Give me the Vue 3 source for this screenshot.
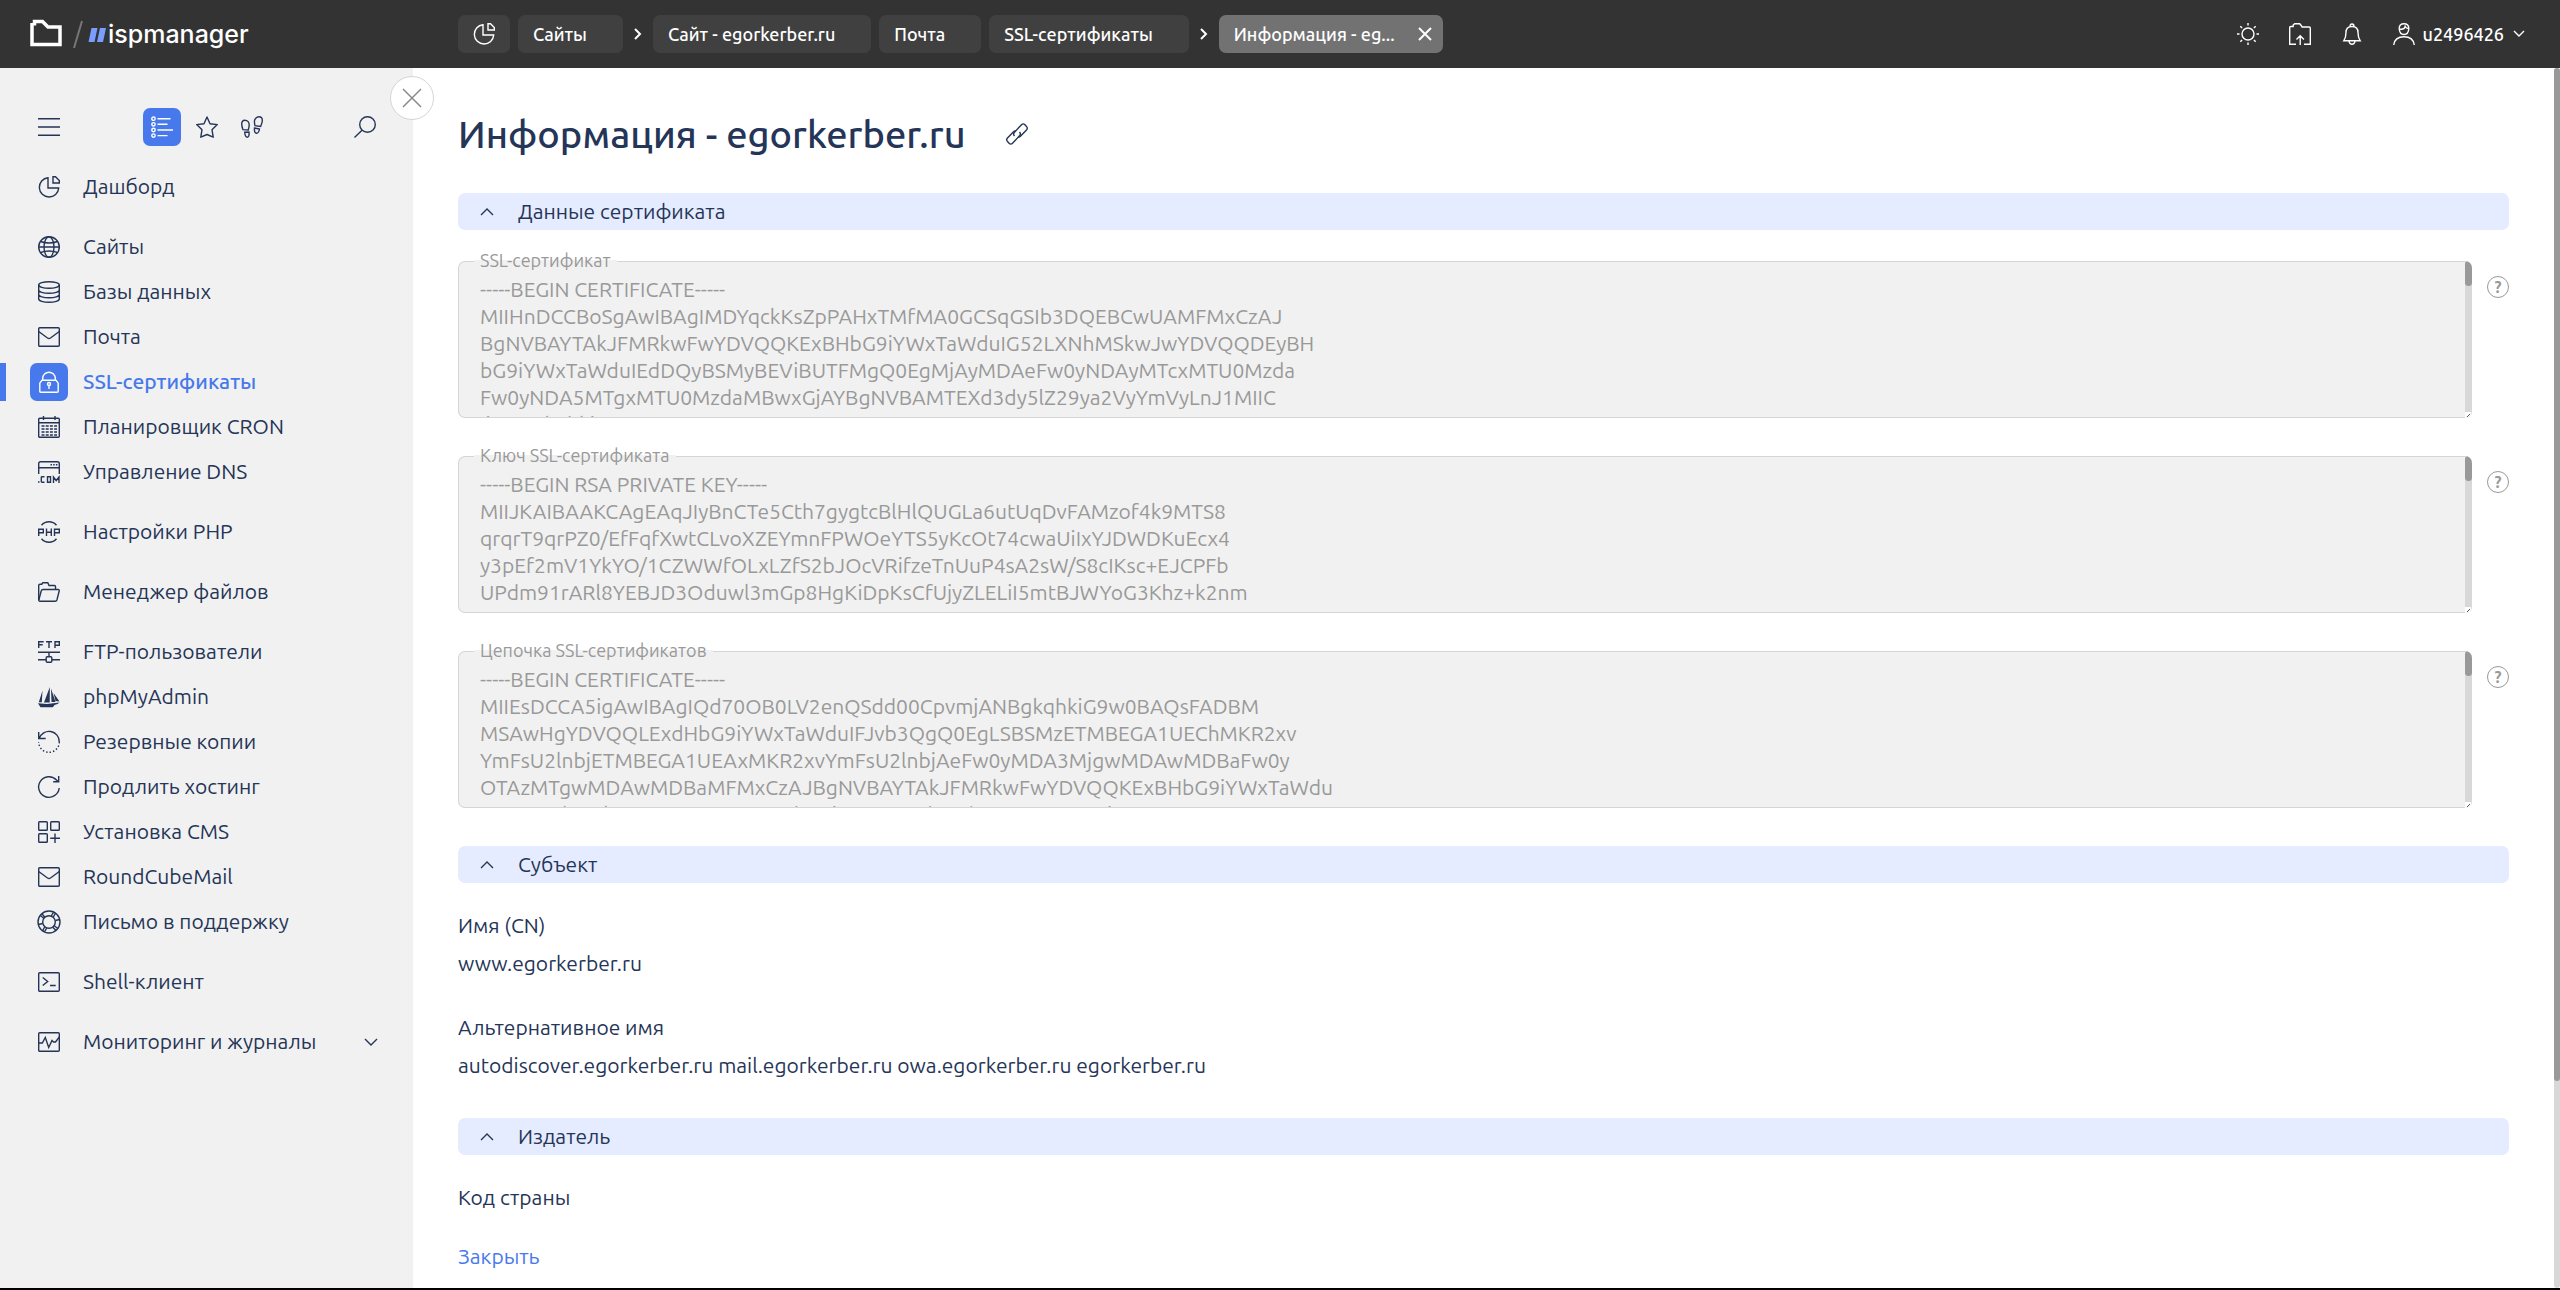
<script setup>
import { ref } from 'vue'

const icons = {
  pie: '<path d="M10 1.7A9.7 9.7 0 1 0 20.700 12H10z"/><path d="M15 .7v6.300h6.300V4.500L17.500.7z"/>',
  globe: '<circle cx="11" cy="11" r="10.300"/><ellipse cx="11" cy="11" rx="5" ry="10.300"/><path d="M.7 11h20.600M2.500 5.500c5 1.800 12 1.800 17 0M2.500 16.500c5-1.800 12-1.800 17 0"/>',
  db: '<ellipse cx="11" cy="4" rx="10.300" ry="3.300"/><path d="M.7 4v14c0 1.800 4.600 3.300 10.300 3.300s10.300-1.500 10.300-3.300V4M.7 9c0 1.800 4.600 3.300 10.300 3.300S21.300 10.800 21.300 9M.7 13.500c0 1.800 4.600 3.300 10.300 3.300s10.300-1.500 10.300-3.300"/>',
  mail: '<rect x=".7" y="1.700" width="20.600" height="18.600" rx="1"/><path d="M.7 5.500l8.800 6.500q1.500 1 3 0l8.800-6.500"/>',
  lock: '<path d="M4.700 10V7.500a6.300 6.300 0 0 1 12.600 0V10"/><path d="M4 9.200h14l2.200 3v8.100q0 1-1 1H2.800q-1 0-1-1v-8.100z"/><circle cx="11" cy="13" r="1.500"/><path d="M11 14.500V18"/>',
  cal: '<rect x=".7" y="2.200" width="20.600" height="19.100" rx="1"/><path d="M.7 6.700h20.600M5.500 0v4M17 0v4"/><path d="M3.500 10h15.500M3.500 13h15.500M3.500 16h15.500M3.500 19h15.500" stroke-dasharray="3 1.200"/>',
  dns: '<path d="M.7 13V2.700q0-2 2-2h16.600q2 0 2 2V13M.7 6.700h20.600"/><path d="M12.500 3.700h7" stroke-dasharray="1.500 1.200"/><path d="M0 21h1.500M6.500 15.700H4q-.700 0-.700.700v4.200q0 .700.700.700h2.500M9.500 15.700h3v5.600h-3zM15.500 22v-6l2.700 3.500L21 16v6"/>',
  php: '<path d="M3.500 4.200Q6.500.7 11 .7t7.500 3.500M3.500 17.800Q6.500 21.300 11 21.300t7.500-3.500"/><path d="M.7 15V8.200h4.600v3.600H.7M8.500 7.500V15M13.300 7.500V15M8.500 11.200h4.800M16.500 15V8.200h4.800v3.600h-4.800"/>',
  folder: '<path d="M.7 19V4.500q0-1.300 1.300-1.300h1.800l1-1.500h5l1.200 2.800h5.500q1 0 1 1v3"/><path d="M2 20.300q-1.500 0-1.100-1.500L3.200 10q.4-1.500 1.800-1.500h15q1.600 0 1.200 1.500l-2.300 9q-.4 1.300-1.700 1.300z"/>',
  ftp: '<path d="M.7 7V.7h5M.7 3.700h4M8 .7h6M11 .7V7M17 7V.7h4.300v3.600H17M0 11.200h22M11 11.200v4.500M0 18.700h8M14 18.700h8"/><rect x="8.200" y="15.700" width="5.600" height="5.600" rx="1"/>',
  boat: '<g fill="currentColor" stroke="none"><path d="M4.500 4.500L.8 16.200h3zM11.800 1L6 16.600h5.700zM13 2.500l.5 13.500h4zM15.500 7l6 8.500-4-.5zM0 17.300l9 .8 12.500-1.600q-1.500 1.500-5 2.500-.5 1.500-2 2.200H2.500z"/></g>',
  backup: '<path d="M.7 1v6.500h7M1.200 7.500A10.300 10.300 0 0 1 21.300 11"/><path d="M21.300 11A10.300 10.300 0 0 1 .7 11" stroke-dasharray="1.500 2"/>',
  renew: '<path d="M21.200 12A10.300 10.300 0 1 1 18.500 4L20.500 6M20.700 0v5.700h-5.500"/>',
  cms: '<rect x=".7" y=".7" width="8.600" height="8.600" rx=".8"/><rect x="12.700" y=".7" width="8.600" height="8.600" rx=".8"/><rect x=".7" y="12.700" width="8.600" height="8.600" rx=".8"/><path d="M17 12.500V22M12.200 17.300H22"/>',
  support: '<circle cx="11" cy="11" r="11"/><circle cx="11" cy="11" r="6.300"/><path d="M4 2.700l2.800 3.500M2.500 4.500L6 7.500M15.500 1.200L13.300 5M17.500 2.200L15.300 6M19.800 17.500l-3.600-2.800M18 19.500l-3.200-3.300M6.500 20.800L8.700 17M4.500 19.800L6.700 16M.3 13.500l4.400-1M21.700 8.500l-4.400 1"/>',
  shell: '<rect x=".7" y="1.700" width="20.600" height="18.600" rx="1"/><path d="M4.700 6.500l5 4-5 4M12 14.500h5.700"/>',
  monitor: '<rect x=".7" y="1.700" width="20.600" height="18.600" rx="1"/><path d="M.7 12h3.600l3-5.500 3.400 10 3.300-7 1.500 1.500h2L21.300 6"/>',
  burger: '<path d="M0 2.700h22M0 11h22M0 19.300h22"/>',
  list: '<circle cx="2.500" cy="2.700" r="1.700"/><circle cx="2.500" cy="8.300" r="1.700"/><circle cx="2.500" cy="14" r="1.700"/><circle cx="2.500" cy="19.600" r="1.700"/><path d="M6.500 2.700h13M6.500 8.300h10M6.500 14H22M6.500 19.600h10"/>',
  star: '<path d="M11 1l3 6.700 7.300.9-5.300 5.100 1.200 7.500L11 18.500l-6.200 2.700L6 13.700.7 8.600 8 7.700z" stroke-linejoin="round"/>',
  feet: '<path d="M2 13.700C1 11 .7 9.500.7 8 .7 5.500 2 4.200 3.900 4.200c2.300 0 4.300 2 4.300 4.800 0 2-.6 3.500-.9 5zM3.700 16.200l4.300-.2q.5 5.200-1.700 5.200-2.100 0-2.600-5zM14 9.700c-.3-1.500-.6-2.700-.6-4.200C13.400 3 15.500.7 18 .7c2.200 0 3.500 1.500 3.300 4-.2 2.500-1 4-1.700 5.800zM13.500 12l5 1q-.8 4.500-3.200 4.200-2.300-.4-1.800-5.200z"/>',
  search: '<circle cx="13.500" cy="8.500" r="7.800"/><path d="M8 14.300L.5 21.500"/>',
  sun: '<circle cx="11" cy="11" r="6"/><path d="M11 0v2.500M11 19.500V22M0 11h2.500M19.500 11H22M3.300 3.300l1.800 1.800M16.900 16.900l1.800 1.800M18.700 3.300l-1.800 1.800M5.100 16.900l-1.800 1.800"/>',
  upload: '<path d="M7 21.300H.7V4.500q0-1 1-1h2.500V2l1.500-1.300h5L12.500 3l.5 1h7.300q1 0 1 1v16.300H15M11.200 22v-9M7.500 16.500l3.700-3.700 3.700 3.700"/>',
  bell: '<path d="M11 3.500C7 3.500 5 6 5 9.500c0 4-.6 6-2.200 8.300h16.400C17.600 15.500 17 13.500 17 9.500c0-3.500-2-6-6-6z"/><path d="M9 3.500q0-2.500 2-2.500t2 2.500M8 18q.5 3.300 3 3.300t3-3.300"/>',
  user: '<path d="M6.200 5.500Q6.200.7 11 .7t4.800 4.800Q15.500 11.500 11 11.500T6.200 5.500zM6.200 6q5 1 6-2.500 1 2 3.600 2M.7 22q1-8.300 10.300-8.300T21.300 22"/>',
  link: '<path d="M8.500 13q-1.800-2 0-3.800l7-7.500q1.700-1.700 3.400 0l1.600 1.700q1.600 1.800 0 3.500l-6.300 6.700q-.8.800-2 .4"/><path transform="rotate(180 11 11)" d="M8.500 13q-1.800-2 0-3.800l7-7.500q1.700-1.700 3.400 0l1.600 1.700q1.600 1.800 0 3.500l-6.300 6.700q-.8.800-2 .4"/>'
}

const menu = [
  [['pie', 'Дашборд']],
  [['globe', 'Сайты'], ['db', 'Базы данных'], ['mail', 'Почта'], ['lock', 'SSL-сертификаты'], ['cal', 'Планировщик CRON'], ['dns', 'Управление DNS']],
  [['php', 'Настройки PHP']],
  [['folder', 'Менеджер файлов']],
  [['ftp', 'FTP-пользователи'], ['boat', 'phpMyAdmin'], ['backup', 'Резервные копии'], ['renew', 'Продлить хостинг'], ['cms', 'Установка CMS'], ['mail', 'RoundCubeMail'], ['support', 'Письмо в поддержку']],
  [['shell', 'Shell-клиент']],
  [['monitor', 'Мониторинг и журналы']]
]
const active = 'SSL-сертификаты'

const fields = ref([
  { id: 'cert', label: 'SSL-сертификат', text: `-----BEGIN CERTIFICATE-----
MIIHnDCCBoSgAwIBAgIMDYqckKsZpPAHxTMfMA0GCSqGSIb3DQEBCwUAMFMxCzAJ
BgNVBAYTAkJFMRkwFwYDVQQKExBHbG9iYWxTaWduIG52LXNhMSkwJwYDVQQDEyBH
bG9iYWxTaWduIEdDQyBSMyBEViBUTFMgQ0EgMjAyMDAeFw0yNDAyMTcxMTU0Mzda
Fw0yNDA5MTgxMTU0MzdaMBwxGjAYBgNVBAMTEXd3dy5lZ29ya2VyYmVyLnJ1MIIC
IjANBgkqhkiG9w0BAQEFAAOCAg8AMIICCgKCAgEA` },
  { id: 'key', label: 'Ключ SSL-сертификата', text: `-----BEGIN RSA PRIVATE KEY-----
MIIJKAIBAAKCAgEAqJIyBnCTe5Cth7gygtcBlHlQUGLa6utUqDvFAMzof4k9MTS8
qrqrT9qrPZ0/EfFqfXwtCLvoXZEYmnFPWOeYTS5yKcOt74cwaUiIxYJDWDKuEcx4
y3pEf2mV1YkYO/1CZWWfOLxLZfS2bJOcVRifzeTnUuP4sA2sW/S8cIKsc+EJCPFb
UPdm91rARl8YEBJD3Oduwl3mGp8HgKiDpKsCfUjyZLELiI5mtBJWYoG3Khz+k2nm
` },
  { id: 'chain', label: 'Цепочка SSL-сертификатов', text: `-----BEGIN CERTIFICATE-----
MIIEsDCCA5igAwIBAgIQd70OB0LV2enQSdd00CpvmjANBgkqhkiG9w0BAQsFADBM
MSAwHgYDVQQLExdHbG9iYWxTaWduIFJvb3QgQ0EgLSBSMzETMBEGA1UEChMKR2xv
YmFsU2lnbjETMBEGA1UEAxMKR2xvYmFsU2lnbjAeFw0yMDA3MjgwMDAwMDBaFw0y
OTAzMTgwMDAwMDBaMFMxCzAJBgNVBAYTAkJFMRkwFwYDVQQKExBHbG9iYWxTaWdu
IG52LXNhMSkwJwYDVQQDEyBHbG9iYWxTaWduIEdDQyBSMyBEViBUTFMgQ0Eg` }
])
</script>

<template>
  <div class="app">
    <header class="topbar">
      <a class="logo" href="#" aria-label="ispmanager">
        <svg width="74" height="32" viewBox="0 0 74 32" fill="none">
          <path d="M2 5v21.500h28V9H18L12.500 3.500H4.500v4" stroke="#fff" stroke-width="3.500" />
          <path d="M52 3l-8 27" stroke="#777" stroke-width="2" />
          <path d="M61.500 10h6l-3 14h-6zM70 10h6l-3 14h-6z" fill="#7a9eff" />
        </svg>
        <span>ispmanager</span>
      </a>
      <nav class="crumbs">
        <button class="crumb home" aria-label="Дашборд"><svg class="icon" viewBox="0 0 22 22" v-html="icons.pie" /></button>
        <button class="crumb">Сайты</button>
        <svg class="sep" viewBox="0 0 10 12"><path d="M2 1l5 5-5 5" /></svg>
        <button class="crumb">Сайт - egorkerber.ru</button>
        <button class="crumb">Почта</button>
        <button class="crumb">SSL-сертификаты</button>
        <svg class="sep" viewBox="0 0 10 12"><path d="M2 1l5 5-5 5" /></svg>
        <button class="crumb current">Информация - eg...<svg class="close" viewBox="0 0 14 14"><path d="M1 1l12 12M13 1L1 13" /></svg></button>
      </nav>
      <div class="tools">
        <button aria-label="Тема"><svg class="icon" viewBox="0 0 22 22" v-html="icons.sun" /></button>
        <button aria-label="Загрузки"><svg class="icon" viewBox="0 0 22 22" v-html="icons.upload" /></button>
        <button aria-label="Уведомления"><svg class="icon" viewBox="0 0 22 22" v-html="icons.bell" /></button>
        <button class="account"><svg class="icon" viewBox="0 0 22 22" v-html="icons.user" />u2496426<svg class="chev" viewBox="0 0 14 8"><path d="M2 1l5 5 5-5" /></svg></button>
      </div>
    </header>

    <div class="body">
      <aside class="sidebar">
        <button class="collapse" aria-label="Закрыть меню"><svg viewBox="0 0 20 20"><path d="M1 1l18 18M19 1L1 19" /></svg></button>
        <div class="modes">
          <button aria-label="Меню"><svg class="icon" viewBox="0 0 22 22" v-html="icons.burger" /></button>
          <div class="mode-group">
            <button class="selected" aria-label="Список"><svg class="icon" viewBox="0 0 22 22" v-html="icons.list" /></button>
            <button aria-label="Избранное"><svg class="icon" viewBox="0 0 22 22" v-html="icons.star" /></button>
            <button aria-label="История"><svg class="icon" viewBox="0 0 22 22" v-html="icons.feet" /></button>
          </div>
          <button aria-label="Поиск"><svg class="icon" viewBox="0 0 22 22" v-html="icons.search" /></button>
        </div>
        <nav class="menu">
          <ul v-for="(group, i) in menu" :key="i">
            <li v-for="[icon, name] in group" :key="name">
              <a href="#" :class="{ active: name === active }">
                <span class="badge"><svg class="icon" viewBox="0 0 22 22" v-html="icons[icon]" /></span>
                {{ name }}
                <svg v-if="icon === 'monitor'" class="chev more" viewBox="0 0 14 8"><path d="M1 1l6 6 6-6" /></svg>
              </a>
            </li>
          </ul>
        </nav>
      </aside>

      <main class="page">
        <div class="content">
          <h1>Информация - egorkerber.ru <a href="#" aria-label="Ссылка"><svg class="icon" viewBox="0 0 22 22" v-html="icons.link" /></a></h1>

          <button class="section"><svg class="chev" viewBox="0 0 14 8"><path d="M1 7l6-6 6 6" /></svg>Данные сертификата</button>
          <div class="fields">
            <div v-for="f in fields" :key="f.id" class="field">
              <div class="box">
                <label :for="f.id">{{ f.label }}</label>
                <textarea :id="f.id" v-model="f.text" readonly spellcheck="false" wrap="off"></textarea>
                <div class="track">
                  <div class="thumb"></div>
                  <svg class="grip" viewBox="0 0 6 6"><path d="M2 5l3-3" /></svg>
                </div>
              </div>
              <button class="help" :aria-label="'Справка: ' + f.label">?</button>
            </div>
          </div>

          <button class="section"><svg class="chev" viewBox="0 0 14 8"><path d="M1 7l6-6 6 6" /></svg>Субъект</button>
          <dl>
            <dt>Имя (CN)</dt>
            <dd>www.egorkerber.ru</dd>
            <dt>Альтернативное имя</dt>
            <dd>autodiscover.egorkerber.ru mail.egorkerber.ru owa.egorkerber.ru egorkerber.ru</dd>
          </dl>

          <button class="section"><svg class="chev" viewBox="0 0 14 8"><path d="M1 7l6-6 6 6" /></svg>Издатель</button>
          <dl>
            <dt>Код страны</dt>
          </dl>
        </div>
        <footer class="actions"><button>Закрыть</button></footer>
      </main>
      <div class="page-track"><div class="page-thumb"></div></div>
    </div>
  </div>
</template>

<style>
body {
  margin: 0;
  background: #fff;
}
</style>

<style scoped>
.app {
  display: flex;
  flex-direction: column;
  height: 100vh;
  box-sizing: border-box;
  border-bottom: 2px solid #000;
  font: 21px/27px Ubuntu, "Noto Sans", sans-serif;
  color: #253557;
}
button {
  font: inherit;
  color: inherit;
  background: none;
  border: 0;
  padding: 0;
  cursor: pointer;
}
a {
  color: inherit;
  text-decoration: none;
}
svg {
  display: block;
  flex: none;
  overflow: visible;
}
.icon {
  width: 22px;
  height: 22px;
  fill: none;
  stroke: currentColor;
  stroke-width: 1.4;
}
.chev {
  width: 14px;
  height: 8px;
  fill: none;
  stroke: currentColor;
  stroke-width: 1.4;
}

.topbar {
  display: flex;
  align-items: center;
  flex: none;
  height: 68px;
  background: #333;
  color: #fff;
  font-size: 18px;
  font-weight: 500;
}
.logo {
  display: flex;
  align-items: center;
  gap: 4px;
  width: 428px;
  padding-left: 30px;
  font: 500 25px/30px Inter, sans-serif;
}
.crumbs {
  display: flex;
  align-items: center;
  gap: 8px;
}
.crumb {
  display: flex;
  align-items: center;
  height: 38px;
  padding: 0 36px 0 15px;
  border-radius: 7px;
  background: #404040;
}
.crumb.home {
  padding: 0 15px;
}
.crumb.current {
  gap: 23px;
  padding-right: 11px;
  background: #727272;
}
.close {
  width: 14px;
  height: 14px;
  stroke: #fff;
  stroke-width: 2;
}
.sep {
  width: 10px;
  height: 12px;
  margin: 0 2px;
  fill: none;
  stroke: #fff;
  stroke-width: 2;
}
.tools {
  display: flex;
  align-items: center;
  gap: 30px;
  margin-left: auto;
  padding-right: 34px;
}
.account {
  display: flex;
  align-items: center;
  gap: 8px;
}

.body {
  display: flex;
  flex: 1;
  min-height: 0;
}
.sidebar {
  position: relative;
  flex: none;
  width: 413px;
  background: #f1f1f1;
}
.collapse {
  position: absolute;
  top: 8px;
  right: -21px;
  z-index: 1;
  display: grid;
  place-items: center;
  width: 44px;
  height: 44px;
  border: 1px solid #d5d5d5;
  border-radius: 50%;
  background: #fff;
}
.collapse svg {
  width: 20px;
  height: 20px;
  stroke: #8a8a8a;
  stroke-width: 1.5;
}
.modes {
  display: flex;
  align-items: center;
  height: 38px;
  padding: 40px 37px 18px 38px;
}
.mode-group {
  display: flex;
  align-items: center;
  gap: 23px;
  margin: 0 auto 0 83px;
}
.mode-group button:first-child {
  margin-right: -8px;
}
.selected {
  padding: 8px;
  border-radius: 7px;
  background: #4879ec;
  color: #fff;
}
.menu ul {
  list-style: none;
  margin: 0 0 15px;
  padding: 0;
}
.menu a {
  display: flex;
  align-items: center;
  gap: 15px;
  height: 45px;
  padding: 0 35px 0 30px;
}
.badge {
  padding: 8px;
  border-radius: 7px;
}
.active {
  color: #4879ec;
  font-weight: 500;
  background: linear-gradient(#4879ec, #4879ec) left center / 6px 38px no-repeat;
}
.active .badge {
  background: #4879ec;
  color: #fff;
}
.more {
  margin-left: auto;
}

.page {
  display: flex;
  flex-direction: column;
  flex: 1;
  min-width: 0;
  padding: 0 45px;
}
.content {
  flex: 1;
  min-height: 0;
  overflow: hidden;
}
h1 {
  display: flex;
  align-items: center;
  gap: 40px;
  margin: 42px 0 35px;
  font-size: 38px;
  font-weight: 500;
  line-height: 48px;
}
.section {
  display: flex;
  align-items: center;
  gap: 24px;
  width: 100%;
  height: 37px;
  padding: 0 22px;
  border-radius: 7px;
  background: #e5ecff;
}
.fields {
  display: grid;
  gap: 38px;
  margin: 31px 0 38px;
}
.field {
  display: flex;
  align-items: flex-start;
  gap: 15px;
}
.box {
  position: relative;
  display: flex;
  flex: 1;
  box-sizing: border-box;
  height: 157px;
  border: 1px solid #d5d5d5;
  border-right: 0;
  border-radius: 7px;
  background: #f1f1f1;
  color: #999;
}
.box label {
  position: absolute;
  top: -13px;
  left: 15px;
  padding: 0 6px;
  font-size: 18px;
  line-height: 22px;
  background: linear-gradient(transparent 11px, #f1f1f1 11px);
}
.box textarea {
  flex: 1;
  box-sizing: border-box;
  margin: 0;
  padding: 14px 21px 0;
  border: 0;
  outline: 0;
  background: none;
  color: inherit;
  font: inherit;
  resize: none;
  overflow: hidden;
}
.track {
  display: flex;
  flex-direction: column;
  justify-content: space-between;
  width: 7px;
  margin: -1px 0;
  border-radius: 0 7px 7px 0;
  background: #d8d8d8;
  overflow: hidden;
}
.thumb {
  height: 25px;
  border-radius: 4px;
  background: #999;
}
.grip {
  width: 6px;
  height: 6px;
  background: #fff;
  stroke: #555;
}
.help {
  box-sizing: border-box;
  width: 22px;
  height: 22px;
  margin-top: 15px;
  border: 1px solid #999;
  border-radius: 50%;
  color: #999;
  font-size: 16px;
  font-weight: 700;
  line-height: 20px;
}
dl {
  margin: 29px 0 39px;
}
dd {
  margin: 11px 0 37px;
}
.actions {
  flex: none;
  height: 45px;
  padding-top: 18px;
  background: #fff;
  color: #4879ec;
}
.page-track {
  flex: none;
  width: 6px;
  border-radius: 3px;
  background: #d8d8d8;
}
.page-thumb {
  height: 83%;
  border-radius: 3px;
  background: #999;
}
</style>
